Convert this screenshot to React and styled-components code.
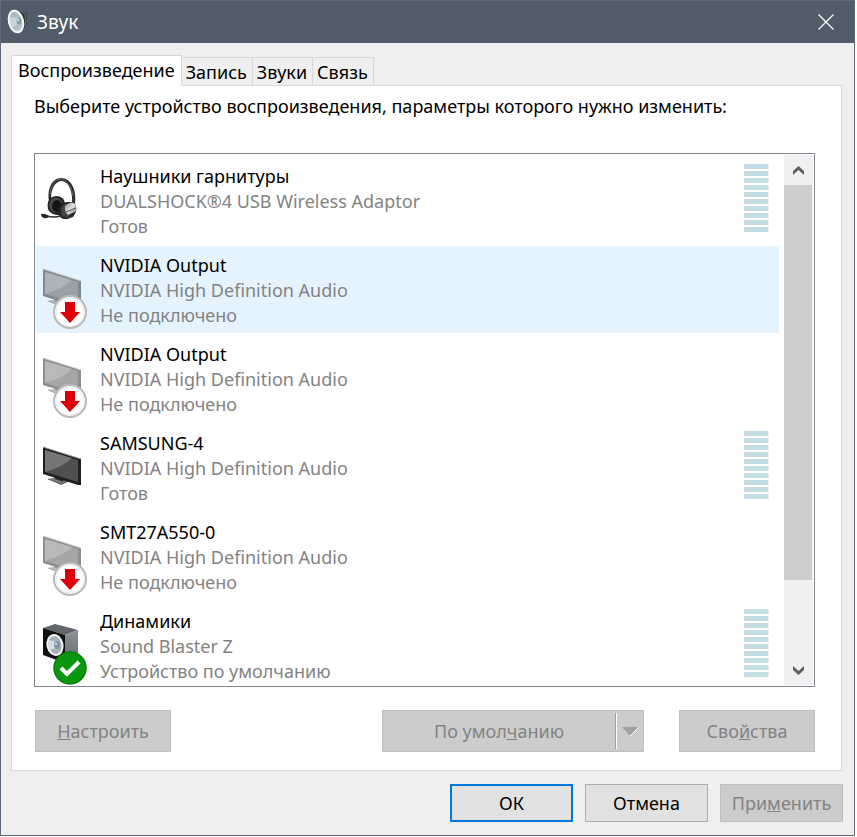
import React, { useState } from 'react';
import styled, { createGlobalStyle } from 'styled-components';

const GlobalStyle = createGlobalStyle`
  *, *::before, *::after {
    box-sizing: border-box;
  }
  html, body, #root {
    height: 100%;
    margin: 0;
  }
  body {
    background: #ffffff;
    font-family: 'Noto Sans', 'Open Sans', sans-serif;
    color: #000000;
  }
  button {
    font-family: inherit;
    margin: 0;
  }
`;

const Page = styled.div`
  height: 100%;
  padding: 0 2px 1px 0;
`;

const Dialog = styled.div`
  display: flex;
  flex-direction: column;
  height: 100%;
  background: #efefef;
  border: 1px solid #5f6b7a;
`;

const TitleBar = styled.header`
  display: flex;
  align-items: center;
  flex: none;
  height: 42px;
  padding: 0 20px 0 6px;
  background: #505c6a;
`;

const Title = styled.h1`
  flex: 1;
  margin: 0 0 0 7px;
  font-size: 19px;
  font-weight: 400;
  line-height: 28px;
  color: #ffffff;
`;

const CloseButton = styled.button`
  display: flex;
  padding: 0;
  border: 0;
  background: none;
`;

const Content = styled.div`
  display: flex;
  flex-direction: column;
  flex: 1;
  min-height: 0;
  padding: 12px 12px 0 10px;
`;

const TabList = styled.div`
  display: flex;
  align-items: flex-end;
  height: 31px;
  margin-bottom: -1px;
`;

const Tab = styled.button`
  position: relative;
  height: ${(props) => (props.$active ? 31 : 29)}px;
  padding: ${(props) => (props.$active ? '0 6px 2px' : '0 5px 0 4px')};
  border: 1px solid #d9d9d9;
  border-left-width: ${(props) => (props.$active ? 1 : 0)}px;
  border-bottom-color: ${(props) => (props.$active ? '#ffffff' : '#d9d9d9')};
  background: ${(props) => (props.$active ? '#ffffff' : '#efefef')};
  font-size: 18px;
  line-height: 24px;
  white-space: nowrap;
`;

const Panel = styled.section`
  display: flex;
  flex-direction: column;
  flex: 1;
  min-height: 0;
  padding: 8px 26px 18px 22px;
  border: 1px solid #d9d9d9;
  background: #ffffff;
`;

const Hint = styled.p`
  margin: 0 0 34px;
  font-size: 18px;
  line-height: 25px;
`;

const ListFrame = styled.div`
  display: flex;
  flex: 1;
  min-height: 0;
  padding: 1px;
  border: 1px solid #828790;
`;

const DeviceList = styled.ul`
  display: flex;
  flex-direction: column;
  gap: 2px;
  flex: 1;
  min-width: 0;
  margin: 0 5px 0 0;
  padding: 2px 0 0;
  overflow: hidden;
  list-style: none;
`;

const Device = styled.li`
  display: flex;
  flex: none;
  height: 87px;
  padding: 7px 10px 5px 4px;
  background: ${(props) => (props.$selected ? '#e5f3ff' : 'transparent')};
`;

const DeviceIcon = styled.div`
  position: relative;
  flex: none;
  width: 60px;
  padding: 12px 0 0 1px;
`;

const Badge = styled.span`
  position: absolute;
  top: 42px;
  left: 13px;
  display: flex;
`;

const DeviceText = styled.div`
  flex: 1;
  min-width: 0;
`;

const DeviceLine = styled.div`
  font-size: 18px;
  line-height: 25px;
  color: ${(props) => (props.$muted ? '#838383' : '#000000')};
  white-space: nowrap;
`;

const Meter = styled.div`
  display: flex;
  flex-direction: column;
  gap: 2px;
  flex: none;
  width: 25px;
`;

const MeterBar = styled.span`
  height: 5px;
  border-right: 1px solid #e0eef1;
  background: #c3dde4;
`;

const ScrollBar = styled.div`
  display: flex;
  flex-direction: column;
  flex: none;
  width: 29px;
  background: #f0f0f0;
`;

const ScrollButton = styled.button`
  display: flex;
  align-items: center;
  justify-content: center;
  height: 30px;
  padding: 2px 0 0;
  border: 0;
  background: #f0f0f0;
`;

const ScrollTrack = styled.div`
  flex: 1;
`;

const ScrollThumb = styled.div`
  width: 28px;
  height: 84%;
  background: #cdcdcd;
`;

const Actions = styled.div`
  display: flex;
  gap: 35px;
  margin-top: 23px;
  padding-left: 1px;
`;

const Button = styled.button`
  height: ${(props) => (props.$footer ? 38 : 42)}px;
  width: ${(props) => (props.$footer ? 123 : 136)}px;
  padding: 0;
  border: ${(props) => (props.$primary ? '2px solid #0078d7' : '1px solid #adadad')};
  background: #e1e1e1;
  color: #000000;
  font-size: 18px;
  line-height: 24px;

  &:disabled {
    border-color: #bfbfbf;
    background: #cccccc;
    color: #838383;
  }
`;

const SplitButton = styled.div`
  display: flex;
  width: 262px;
  height: 42px;
  margin-left: auto;
  border: 1px solid #bfbfbf;
  background: #cccccc;
`;

const SplitPart = styled.button`
  display: flex;
  align-items: center;
  justify-content: center;
  flex: ${(props) => (props.$menu ? 'none' : 1)};
  width: ${(props) => (props.$menu ? '26px' : 'auto')};
  padding: 0;
  border: 0;
  background: none;
  color: #838383;
  font-size: 18px;
  line-height: 24px;
`;

const Divider = styled.span`
  width: 2px;
  margin: 2px 0;
  border-left: 1px solid #a0a0a0;
  border-right: 1px solid #ffffff;
`;

const Footer = styled.footer`
  display: flex;
  justify-content: flex-end;
  gap: 12px;
  flex: none;
  padding: 13px 11px;
`;

const SoundIcon = () => (
  <svg width='23' height='26' viewBox='0 0 23 26' aria-hidden='true'>
    <defs>
      <linearGradient id='cone' x1='0' y1='0' x2='1' y2='1'>
        <stop offset='0' stopColor='#9fb0b6' />
        <stop offset='1' stopColor='#c3ced2' />
      </linearGradient>
    </defs>
    <path d='M12 2 L17 5 L20 4 Q23 9 20 15 L17 19 L12 24 Z' fill='#33383c' />
    <path d='M18 5 Q20 10 18 17 M20.5 5 Q22 9 20 14' stroke='#6f757a' fill='none' />
    <ellipse
      cx='9'
      cy='12.5'
      rx='7'
      ry='11'
      transform='rotate(-14 9 12.5)'
      fill='url(#cone)'
      stroke='#f6f7f7'
      strokeWidth='2'
    />
    <path d='M2.5 8 L11 9 L11 15 L5 19 Q2 14 2.5 8' fill='#d7dfe2' opacity='.7' />
    <ellipse cx='12' cy='12' rx='2.5' ry='3.5' fill='#86a0aa' />
    <circle cx='11' cy='11' r='1' fill='#d6e0e3' />
  </svg>
);

const CloseIcon = () => (
  <svg width='16' height='16' viewBox='0 0 16 16' aria-hidden='true'>
    <path d='M.5 .5 L15.5 15.5 M15.5 .5 L.5 15.5' stroke='#ffffff' strokeWidth='1.2' />
  </svg>
);

const HeadsetIcon = () => (
  <svg width='40' height='46' viewBox='0 0 40 46' aria-hidden='true'>
    <defs>
      <linearGradient id='silver' x1='0' y1='0' x2='1' y2='1'>
        <stop offset='0' stopColor='#8b8b8b' />
        <stop offset='.5' stopColor='#e0e0e0' />
        <stop offset='1' stopColor='#777777' />
      </linearGradient>
    </defs>
    <path
      d='M8 25 C6 13 11 2 20 2 C30 2 36 14 34 28 L31 28 C32 16 28 6 21 5 C14 5 10 13 10 23 Z'
      fill='#2c2c2c'
    />
    <path d='M9 18 C10 8 15 3 20 3 C26 4 31 11 32 20' fill='none' stroke='#777777' strokeWidth='.8' />
    <path d='M7 26 Q9 20 16 20 Q23 21 24 27 L21 38 Q17 40 12 38 Q5 35 7 26' fill='#222222' />
    <ellipse cx='15' cy='29' rx='7' ry='7.5' fill='#484848' />
    <ellipse cx='16' cy='30' rx='5' ry='6' fill='#151515' />
    <path d='M17 36 Q18 27 26 26 L33 26 Q38 34 32 41 L26 43 Q18 44 17 36' fill='#242424' />
    <ellipse cx='25' cy='35' rx='5' ry='7' fill='#454545' />
    <path d='M24 30 Q29 25 33 27 Q37 32 34 36 L27 39 Q23 35 24 30' fill='url(#silver)' />
    <path d='M25 36 L35 32' stroke='#555555' />
    <path d='M5 40 Q14 42 19 40 L28 42' fill='none' stroke='#303030' strokeWidth='1.6' />
    <path d='M0 38 Q4 37 8 40 Q7 43 3 42 Q0 41 0 38' fill='#2b2b2b' />
  </svg>
);

const MonitorIcon = ({ dimmed }) => (
  <svg
    width='41'
    height='46'
    viewBox='-2 -2 41 46'
    opacity={dimmed ? 0.5 : 1}
    aria-hidden='true'
  >
    <path d='M5 34 L14 32 L26 36 L18 40 Z' fill='#7d8184' />
    <path d='M5 34 L18 39 L26 36' fill='none' stroke='#55585b' />
    <path d='M12 31 L20 34 L20 37 L12 34 Z' fill='#303030' />
    <path d='M0 2 L38 14 L38 40 L35 40 L0 29 Z' fill='#1f1f1f' />
    <path d='M2 5 L35 15 L35 37 L2 27 Z' fill='#505050' />
    <path d='M2 5 L29 13 Q20 22 2 27 Z' fill='#757575' />
    <path d='M0 2 L38 14' stroke='#999999' />
  </svg>
);

const SpeakerIcon = () => (
  <svg width='40' height='46' viewBox='0 0 40 46' aria-hidden='true'>
    <defs>
      <linearGradient id='side' x1='0' y1='0' x2='0' y2='1'>
        <stop offset='0' stopColor='#8d9299' />
        <stop offset='1' stopColor='#666a70' />
      </linearGradient>
    </defs>
    <path d='M2 7 L14 3 L37 9 L24 14 Z' fill='#62666b' />
    <path d='M24 14 L37 9 L37 37 L24 42 Z' fill='url(#side)' />
    <path d='M2 7 L24 14 L24 42 L2 34 Z' fill='#101010' />
    <ellipse cx='14' cy='24' rx='7.5' ry='10' transform='rotate(-12 14 24)' fill='#a5b4ba' stroke='#f5f5f5' strokeWidth='2' />
    <path d='M8 19 L16 21 L15 27 L9 29 Q6 24 8 19' fill='#d5dee1' />
    <ellipse cx='16' cy='24' rx='3' ry='4' fill='#7b97a2' />
    <circle cx='15' cy='23' r='1.2' fill='#cfdade' />
  </svg>
);

const UnpluggedBadge = () => (
  <svg width='34' height='34' viewBox='0 0 34 34' aria-hidden='true'>
    <defs>
      <linearGradient id='arrow' x1='0' y1='0' x2='1' y2='1'>
        <stop offset='0' stopColor='#c80000' />
        <stop offset='.6' stopColor='#e6000c' />
        <stop offset='1' stopColor='#b80000' />
      </linearGradient>
    </defs>
    <circle cx='17' cy='17' r='16' fill='#ffffff' stroke='#b9b9b9' strokeWidth='2' />
    <circle cx='17' cy='17' r='14' fill='none' stroke='#ececec' />
    <path d='M12 7 H22 V17 H27 L17 28 L7 17 H12 Z' fill='url(#arrow)' />
  </svg>
);

const DefaultBadge = () => (
  <svg width='34' height='34' viewBox='0 0 34 34' aria-hidden='true'>
    <circle cx='17' cy='17' r='16' fill='#0a960d' stroke='#0b7d10' strokeWidth='1.5' />
    <path d='M8 17 L14 23 L26 11' fill='none' stroke='#ffffff' strokeWidth='4' />
  </svg>
);

const ArrowIcon = ({ down }) => (
  <svg width='13' height='10' viewBox='0 0 13 10' aria-hidden='true'>
    <path
      d={down ? 'M1 0 L6.5 5 L12 0 V4 L6.5 9 L1 4 Z' : 'M1 9 L6.5 4 L12 9 V5 L6.5 0 L1 5 Z'}
      fill='#606060'
    />
  </svg>
);

const DropIcon = () => (
  <svg width='19' height='11' viewBox='0 0 19 11' aria-hidden='true'>
    <path d='M1 1 H18 L9 10 Z' fill='#a0a0a0' />
    <path d='M18 1 L9 10' stroke='#ffffff' />
  </svg>
);

const tabs = ['Воспроизведение', 'Запись', 'Звуки', 'Связь'];

const devices = [
  { name: 'Наушники гарнитуры', driver: 'DUALSHOCK®4 USB Wireless Adaptor', status: 'Готов', icon: 'headset', meter: true },
  { name: 'NVIDIA Output', driver: 'NVIDIA High Definition Audio', status: 'Не подключено', icon: 'monitor', unplugged: true },
  { name: 'NVIDIA Output', driver: 'NVIDIA High Definition Audio', status: 'Не подключено', icon: 'monitor', unplugged: true },
  { name: 'SAMSUNG-4', driver: 'NVIDIA High Definition Audio', status: 'Готов', icon: 'monitor', meter: true },
  { name: 'SMT27A550-0', driver: 'NVIDIA High Definition Audio', status: 'Не подключено', icon: 'monitor', unplugged: true },
  { name: 'Динамики', driver: 'Sound Blaster Z', status: 'Устройство по умолчанию', icon: 'speaker', meter: true, isDefault: true },
];

const icons = {
  headset: HeadsetIcon,
  monitor: MonitorIcon,
  speaker: SpeakerIcon,
};

const DeviceRow = ({ device, selected, onSelect }) => {
  const Icon = icons[device.icon];
  return (
    <Device $selected={selected} onClick={onSelect}>
      <DeviceIcon>
        <Icon dimmed={device.unplugged} />
        {device.unplugged && (
          <Badge>
            <UnpluggedBadge />
          </Badge>
        )}
        {device.isDefault && (
          <Badge>
            <DefaultBadge />
          </Badge>
        )}
      </DeviceIcon>
      <DeviceText>
        <DeviceLine>{device.name}</DeviceLine>
        <DeviceLine $muted>{device.driver}</DeviceLine>
        <DeviceLine $muted>{device.status}</DeviceLine>
      </DeviceText>
      {device.meter && (
        <Meter>
          {Array.from({ length: 10 }, (_, i) => (
            <MeterBar key={i} />
          ))}
        </Meter>
      )}
    </Device>
  );
};

const App = () => {
  const [activeTab, setActiveTab] = useState(0);
  const [selected, setSelected] = useState(1);

  return (
    <Page>
      <GlobalStyle />
      <Dialog role='dialog' aria-labelledby='title'>
        <TitleBar>
          <SoundIcon />
          <Title id='title'>Звук</Title>
          <CloseButton aria-label='Закрыть'>
            <CloseIcon />
          </CloseButton>
        </TitleBar>
        <Content>
          <TabList role='tablist'>
            {tabs.map((tab, i) => (
              <Tab
                key={tab}
                role='tab'
                aria-selected={activeTab === i}
                $active={activeTab === i}
                onClick={() => setActiveTab(i)}
              >
                {tab}
              </Tab>
            ))}
          </TabList>
          <Panel>
            <Hint>Выберите устройство воспроизведения, параметры которого нужно изменить:</Hint>
            <ListFrame>
              <DeviceList>
                {devices.map((device, i) => (
                  <DeviceRow
                    key={i}
                    device={device}
                    selected={selected === i}
                    onSelect={() => setSelected(i)}
                  />
                ))}
              </DeviceList>
              <ScrollBar>
                <ScrollButton aria-label='Вверх'>
                  <ArrowIcon />
                </ScrollButton>
                <ScrollTrack>
                  <ScrollThumb />
                </ScrollTrack>
                <ScrollButton aria-label='Вниз'>
                  <ArrowIcon down />
                </ScrollButton>
              </ScrollBar>
            </ListFrame>
            <Actions>
              <Button disabled>
                <u>Н</u>астроить
              </Button>
              <SplitButton>
                <SplitPart disabled>
                  <span>
                    По умол<u>ч</u>анию
                  </span>
                </SplitPart>
                <Divider />
                <SplitPart $menu disabled aria-label='Другие варианты'>
                  <DropIcon />
                </SplitPart>
              </SplitButton>
              <Button disabled>
                Сво<u>й</u>ства
              </Button>
            </Actions>
          </Panel>
        </Content>
        <Footer>
          <Button $footer $primary>ОК</Button>
          <Button $footer>Отмена</Button>
          <Button $footer disabled>
            При<u>м</u>енить
          </Button>
        </Footer>
      </Dialog>
    </Page>
  );
};

export default App;
